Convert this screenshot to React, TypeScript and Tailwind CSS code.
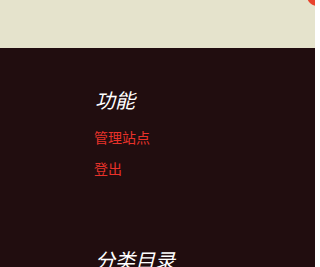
import React from "react";

export default function App() {
  return (
    <div className="w-[315px] h-[267px] overflow-hidden bg-[#210d0f] relative" style={{ fontFamily: '"Noto Sans CJK SC", "Noto Sans", sans-serif' }}>
      <div className="h-[48px] bg-[#e5e3cc] relative overflow-hidden">
        <div className="absolute right-[-12px] top-[-14px] w-[20px] h-[20px] rounded-full bg-[#e8432c]" />
      </div>
      <div className="pl-[94px] pt-[38px]">
        <h2 className="pl-[1px] text-[20px] leading-[28px] italic text-white font-normal">功能</h2>
        <ul className="mt-[13px] flex flex-col gap-[10px]">
          <li className="text-[14px] leading-[21px] text-[#e8322a]">管理站点</li>
          <li className="text-[14px] leading-[21px] text-[#e8322a]">登出</li>
        </ul>
        <h2 className="pl-[1px] mt-[67px] text-[20px] leading-[28px] italic text-white font-normal">分类目录</h2>
      </div>
    </div>
  );
}
